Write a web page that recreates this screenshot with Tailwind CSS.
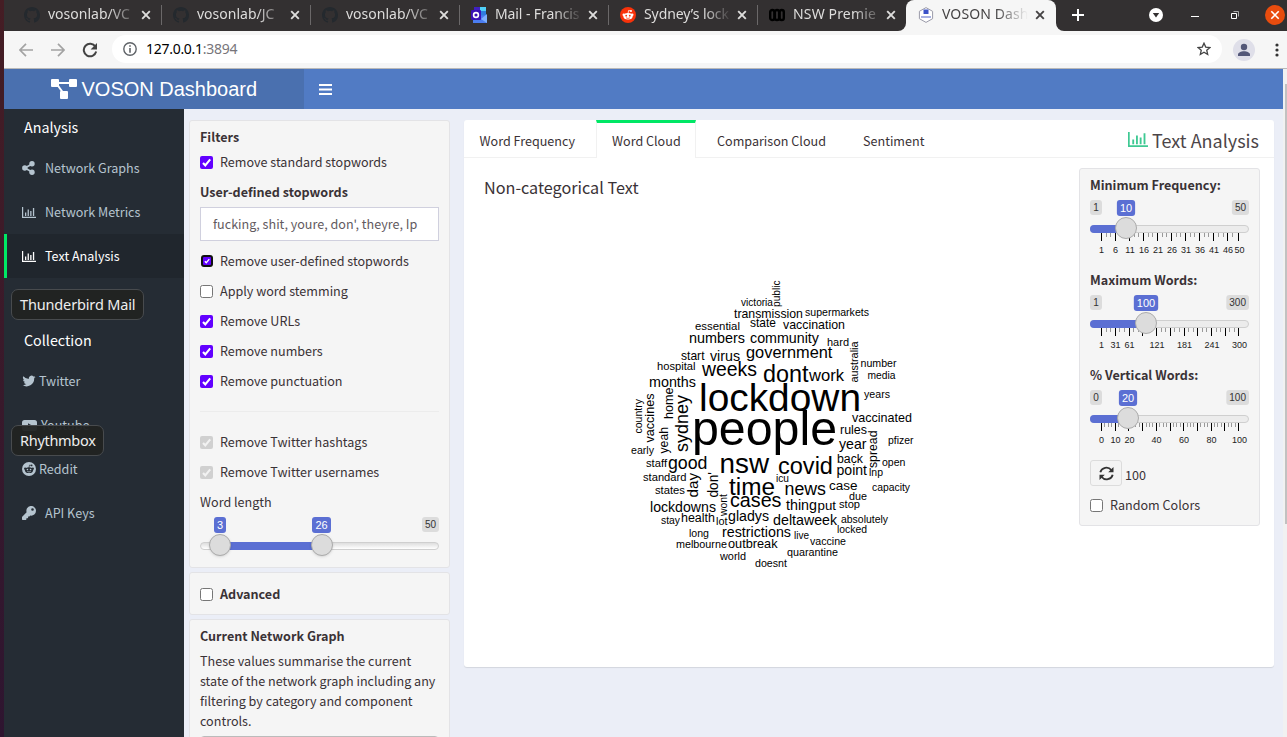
<!DOCTYPE html>
<html lang="en">
<head>
<meta charset="utf-8">
<title>VOSON Dashboard</title>
<script src="https://cdn.jsdelivr.net/npm/@tailwindcss/browser@4"></script>
</head>
<body class="w-[1287px] h-[737px] overflow-hidden flex bg-[#35182b] font-['Noto_Sans_CJK_SC',sans-serif] text-[#3a3236]">
<svg class="hidden">
  <symbol id="github" viewBox="0 0 16 16"><path fill="#24292e" fill-rule="evenodd" d="M8 0C3.58 0 0 3.58 0 8c0 3.54 2.29 6.53 5.47 7.59.4.07.55-.17.55-.38 0-.19-.01-.82-.01-1.49-2.01.37-2.53-.49-2.69-.94-.09-.23-.48-.94-.82-1.13-.28-.15-.68-.52-.01-.53.63-.01 1.08.58 1.23.82.72 1.21 1.87.87 2.33.66.07-.52.28-.87.51-1.07-1.78-.2-3.64-.89-3.64-3.95 0-.87.31-1.59.82-2.15-.08-.2-.36-1.02.08-2.12 0 0 .67-.21 2.2.82a7.6 7.6 0 0 1 4 0c1.53-1.04 2.2-.82 2.2-.82.44 1.1.16 1.92.08 2.12.51.56.82 1.27.82 2.15 0 3.07-1.87 3.75-3.65 3.95.29.25.54.73.54 1.48 0 1.07-.01 1.93-.01 2.2 0 .21.15.46.55.38A8 8 0 0 0 16 8c0-4.42-3.58-8-8-8z"/></symbol>
  <symbol id="close" viewBox="0 0 10 10"><path d="M1.2 1.2l7.6 7.6M8.8 1.2L1.2 8.8" stroke="currentColor" stroke-width="1.9"/></symbol>
  <symbol id="chart" viewBox="0 0 14 11"><path d="M.6 0v10.4H14" fill="none" stroke="currentColor" stroke-width="1.2"/><path fill="currentColor" d="M3 5.5h1.3V9H3zM5.6 2.5h1.3V9H5.6zM8.2 4h1.3v5H8.2zM10.9 1h1.3v8h-1.3z"/></symbol>
  <symbol id="check" viewBox="0 0 13 13"><path d="M3 6.9l2.3 2.4L10.2 3.4" fill="none" stroke="currentColor" stroke-width="2.1"/></symbol>
</svg>

<div class="w-1 shrink-0 bg-gradient-to-b from-[#451d24] to-[#2e1530]"></div>
<div class="w-[1283px] flex flex-col">

  <!-- Browser tab strip -->
  <div class="h-[31px] shrink-0 flex bg-[#f6f6f6] text-[#dedddc] font-['Noto_Sans',sans-serif] text-[14px]">
    <div class="w-[902px] flex pl-[9px] rounded-br-lg bg-[#333031]">
      <div class="w-[149px] h-[29px] flex items-center pl-[11px]"><svg class="size-4 mr-2 shrink-0"><use href="#github"/></svg><span class="w-[88px] mb-[2px] overflow-hidden whitespace-nowrap [mask-image:linear-gradient(to_right,#000_60px,transparent_92px)]">vosonlab/VC</span><svg class="size-[10px] ml-[5px] shrink-0"><use href="#close"/></svg><i class="w-px h-5 bg-[#6b6869] ml-[10px] shrink-0"></i></div>
      <div class="w-[149px] h-[29px] flex items-center pl-[11px]"><svg class="size-4 mr-2 shrink-0"><use href="#github"/></svg><span class="w-[88px] mb-[2px] overflow-hidden whitespace-nowrap [mask-image:linear-gradient(to_right,#000_60px,transparent_92px)]">vosonlab/JC</span><svg class="size-[10px] ml-[5px] shrink-0"><use href="#close"/></svg><i class="w-px h-5 bg-[#6b6869] ml-[10px] shrink-0"></i></div>
      <div class="w-[149px] h-[29px] flex items-center pl-[11px]"><svg class="size-4 mr-2 shrink-0"><use href="#github"/></svg><span class="w-[88px] mb-[2px] overflow-hidden whitespace-nowrap [mask-image:linear-gradient(to_right,#000_60px,transparent_92px)]">vosonlab/VC</span><svg class="size-[10px] ml-[5px] shrink-0"><use href="#close"/></svg><i class="w-px h-5 bg-[#6b6869] ml-[10px] shrink-0"></i></div>
      <div class="w-[149px] h-[29px] flex items-center pl-[11px]">
        <svg class="size-4 mr-2 shrink-0" viewBox="0 0 16 16"><path fill="#50d0f8" d="M3 0h12v9H3z"/><path fill="#3f20c0" d="M3 0h6v3H3z"/><path fill="#2f7de0" d="M9 4h6v5H9z"/><path fill="#4b7df0" d="M2 9l14-1v8H2z"/><path fill="#7db0ff" d="M10 12l6-5v9z"/><rect y="3" width="10" height="10" rx="1" fill="#3b12b5"/><circle cx="5" cy="8" r="2.4" fill="none" stroke="#fff" stroke-width="1.6"/></svg><span class="w-[88px] mb-[2px] overflow-hidden whitespace-nowrap tracking-[-0.1px] [mask-image:linear-gradient(to_right,#000_60px,transparent_88px)]">Mail - Francis</span><svg class="size-[10px] ml-[5px] shrink-0"><use href="#close"/></svg><i class="w-px h-5 bg-[#6b6869] ml-[10px] shrink-0"></i></div>
      <div class="w-[149px] h-[29px] flex items-center pl-[11px]">
        <svg class="size-4 mr-2 shrink-0" viewBox="0 0 16 16"><circle cx="8" cy="8" r="8" fill="#f8320a"/><ellipse cx="8" cy="9.3" rx="4.6" ry="3.3" fill="#fff"/><circle cx="3.7" cy="7.8" r="1.2" fill="#fff"/><circle cx="12.3" cy="7.8" r="1.2" fill="#fff"/><path d="M8 6.5l.6-3 2.3.5" fill="none" stroke="#fff" stroke-width=".8"/><circle cx="11" cy="4" r="1" fill="#fff"/><circle cx="6.2" cy="8.7" r=".9" fill="#f8320a"/><circle cx="9.8" cy="8.7" r=".9" fill="#f8320a"/><path d="M6 10.8q2 1.3 4 0" fill="none" stroke="#f8320a" stroke-width=".7"/></svg><span class="w-[88px] mb-[2px] overflow-hidden whitespace-nowrap tracking-[-0.1px] [mask-image:linear-gradient(to_right,#000_60px,transparent_88px)]">Sydney’s lock</span><svg class="size-[10px] ml-[5px] shrink-0"><use href="#close"/></svg><i class="w-px h-5 bg-[#6b6869] ml-[10px] shrink-0"></i></div>
      <div class="w-[148px] h-[29px] flex items-center pl-[11px]">
        <svg class="size-4 mr-2 shrink-0" viewBox="0 0 16 16"><g fill="none" stroke="#000" stroke-width="2.4"><rect x="1.2" y="3" width="4.2" height="10" rx="2.1"/><rect x="5.9" y="3" width="4.2" height="10" rx="2.1"/><rect x="10.6" y="3" width="4.2" height="10" rx="2.1"/></g></svg><span class="w-[88px] mb-[2px] overflow-hidden whitespace-nowrap tracking-[0.15px] [mask-image:linear-gradient(to_right,#000_60px,transparent_92px)]">NSW Premie</span><svg class="size-[10px] ml-[5px] shrink-0"><use href="#close"/></svg></div>
    </div>
    <div class="bg-[#333031] w-[150px] flex"><div class="w-full flex items-center h-[31px] pb-[2px] pl-[12px] rounded-t-lg bg-[#f6f6f6] text-[#454344]">
      <svg class="size-4 mr-2 shrink-0" viewBox="0 0 16 16"><path d="M8 .6l6.600 3.700v7.400L8 15.400 1.400 11.700V4.300z" fill="#fff" stroke="#9a9aa8"/><path d="M5.500 2.500h5V7h-5z" fill="#3b52c8"/><path d="M3 9h10v2H3z" fill="#a9b2e2"/></svg><span class="w-[86px] mb-[2px] overflow-hidden whitespace-nowrap tracking-[0.1px] [mask-image:linear-gradient(to_right,#000_54px,transparent_86px)]">VOSON Dash</span><svg class="size-[10px] ml-[7px] shrink-0"><use href="#close"/></svg></div></div>
    <div class="flex-1 flex items-center h-[31px] pb-[2px] pl-4 bg-[#333031] rounded-bl-lg">
      <svg class="size-3 text-white shrink-0" viewBox="0 0 12 12"><path d="M6 0v12M0 6h12" stroke="currentColor" stroke-width="2"/></svg>
      <svg class="size-[14px] ml-[65px] shrink-0" viewBox="0 0 14 14"><circle cx="7" cy="7" r="7" fill="#fff"/><path d="M3.800 5h6.400L7 9.400z" fill="#333031"/></svg>
      <i class="w-2 h-px bg-white ml-[28px] mt-[3px] shrink-0"></i>
      <svg class="size-2 ml-[32px] shrink-0" viewBox="0 0 8 8"><path d="M.5 2.500h5v5h-5z" fill="none" stroke="#fff"/><path d="M2.500.5h5v5" fill="none" stroke="#aaa"/></svg>
      <svg class="size-5 ml-[26px] shrink-0" viewBox="0 0 20 20"><circle cx="10" cy="10" r="10" fill="#e94c0e"/><path d="M6.300 6.300l7.400 7.400M13.700 6.300l-7.400 7.400" stroke="#fff" stroke-width="1.6"/></svg>
    </div>
  </div>

  <!-- Address bar -->
  <div class="h-[38px] shrink-0 flex items-center bg-[#f6f6f6] border-b border-[#b9b9b9] pl-[15px]">
    <svg class="w-[14px] h-[14px]" viewBox="0 0 14 14"><path d="M14 7H1M7 .8L.9 7 7 13.2" fill="none" stroke="#a3a3a3" stroke-width="1.7"/></svg>
    <svg class="w-[14px] h-[14px] ml-[18px]" viewBox="0 0 14 14"><path d="M0 7h13M7 .8L13.1 7 7 13.2" fill="none" stroke="#a3a3a3" stroke-width="1.7"/></svg>
    <svg class="w-4 h-4 ml-[17px]" viewBox="0 0 16 16"><path d="M13.4 4.6A6.3 6.3 0 1 0 14.2 9.6" fill="none" stroke="#434343" stroke-width="2"/><path d="M15 1v6.4H8.6z" fill="#434343"/></svg>
    <div class="flex-1 h-7 ml-[14px] mt-[-1px] bg-white rounded-full flex items-center pl-[11px]">
      <svg class="size-[14px]" viewBox="0 0 14 14"><circle cx="7" cy="7" r="6.2" fill="none" stroke="#5f6368" stroke-width="1.4"/><path d="M6.2 3.2h1.6v1.6H6.2zM6.2 6h1.6v4.8H6.2z" fill="#5f6368"/></svg>
      <span class="ml-[9px] mb-[2px] flex-1 font-['Noto_Sans',sans-serif] text-[14px] tracking-[-0.28px] text-black">127.0.0.1<span class="text-[#77757a]">:3894</span></span>
      <svg class="size-[14px] mr-[11px]" viewBox="0 0 14 14"><path d="M7 1.200l1.750 3.900 4.200.4-3.200 2.800.95 4.200L7 10.300l-3.700 2.200.95-4.200-3.200-2.800 4.200-.4z" fill="none" stroke="#434343" stroke-width="1.3"/></svg>
    </div>
    <svg class="size-[22px] ml-[11px]" viewBox="0 0 22 22"><circle cx="11" cy="11" r="11" fill="#dfdfe9"/><circle cx="11" cy="8" r="3.2" fill="#535778"/><path d="M5 17v-1.500c0-2 3-3.300 6-3.300s6 1.300 6 3.300V17z" fill="#535778"/></svg>
    <svg class="w-[4px] h-[14px] ml-[20px] mr-[8px]" viewBox="0 0 4 14"><g fill="#333"><circle cx="2" cy="2" r="1.6"/><circle cx="2" cy="7" r="1.6"/><circle cx="2" cy="12" r="1.6"/></g></svg>
  </div>

  <div class="flex-1 flex">
    <div class="w-[1279px] flex flex-col">
      <!-- Dashboard header -->
      <div class="h-10 shrink-0 flex bg-[#517bc4] text-white">
        <div class="w-[300px] bg-[#4a70af] flex items-center pl-[47px] font-['Liberation_Sans',sans-serif] text-[20px]">
          <svg class="w-[26px] h-5 mr-[4.500px]" viewBox="0 0 26 20"><path d="M4 4h18M5 4l8 11" stroke="#fff" stroke-width="2"/><g fill="#fff"><rect width="8" height="8" rx="1"/><rect x="18" width="8" height="8" rx="1"/><rect x="9" y="12" width="8" height="8" rx="1"/></g></svg>
          <span class="whitespace-nowrap">VOSON Dashboard</span>
        </div>
        <svg class="w-[13px] h-[11px] ml-[15px] mt-[15px]" viewBox="0 0 13 11"><path d="M0 1h13M0 5.500h13M0 10h13" stroke="#fff" stroke-width="2"/></svg>
      </div>

      <div class="flex-1 flex">
        <!-- Sidebar -->
        <div class="w-[180px] bg-[#252c34] text-[#b5c4cf] text-[12.58px] relative">
          <div class="h-[37px] pb-[2px] flex items-center pl-5 text-white text-[14.3px]">Analysis</div>
          <div class="h-11 flex items-center pl-[18px]"><svg class="w-[13px] h-[14px] mr-[10px]" viewBox="0 0 13 14"><path d="M10 3L3 7l7 4" fill="none" stroke="currentColor" stroke-width="1.7"/><g fill="currentColor"><circle cx="10" cy="2.800" r="2.7"/><circle cx="2.800" cy="7" r="2.7"/><circle cx="10" cy="11.2" r="2.7"/></g></svg>Network Graphs</div>
          <div class="h-11 flex items-center pl-[18px]"><svg class="w-[14px] h-[11px] mr-[9px]"><use href="#chart"/></svg>Network Metrics</div>
          <div class="h-11 flex items-center pl-[15px] border-l-[3px] border-[#00e765] bg-[#20262d] text-white"><svg class="w-[14px] h-[11px] mr-[9px]"><use href="#chart"/></svg>Text Analysis</div>
          <div class="h-[44px]"></div>
          <div class="h-[37px] pb-[2px] flex items-center pl-5 text-white text-[14.3px]">Collection</div>
          <div class="h-11 flex items-center pl-[18px]"><svg class="w-[14px] h-3 mr-[3px]" viewBox="0 1 24 22"><path fill="currentColor" d="M24 4.600a10 10 0 0 1-2.8.8 5 5 0 0 0 2.1-2.700 10 10 0 0 1-3.100 1.200 4.900 4.900 0 0 0-8.400 4.500A14 14 0 0 1 1.700 3.100a4.900 4.900 0 0 0 1.500 6.600 5 5 0 0 1-2.200-.6 4.900 4.900 0 0 0 3.900 4.900 5 5 0 0 1-2.200.1 4.900 4.900 0 0 0 4.600 3.400A10 10 0 0 1 0 19.500 14 14 0 0 0 21.500 7.100 10 10 0 0 0 24 4.600z"/></svg>Twitter</div>
          <div class="h-11 flex items-center pl-[18px]"><svg class="w-[15px] h-[11px] mr-[4px]" viewBox="0 0 15 11"><rect width="15" height="11" rx="2.500" fill="currentColor"/><path d="M6 3.200v4.600l4-2.300z" fill="#252c34"/></svg>Youtube</div>
          <div class="h-11 flex items-center pl-[18px]"><svg class="size-[14px] mr-[3px]" viewBox="0 0 16 16"><circle cx="8" cy="8" r="8" fill="currentColor"/><g fill="#252c34"><ellipse cx="8" cy="9.3" rx="4.600" ry="3.400"/><circle cx="3.600" cy="7.700" r="1.300"/><circle cx="12.400" cy="7.700" r="1.300"/><circle cx="11" cy="3.900" r="1"/></g><path d="M8 6.500l.6-3 2.300.5" fill="none" stroke="#252c34" stroke-width=".8"/><g fill="currentColor"><circle cx="6.200" cy="8.600" r=".95"/><circle cx="9.800" cy="8.600" r=".95"/></g><path d="M6 10.700q2 1.400 4 0" fill="none" stroke="currentColor" stroke-width=".8"/></svg>Reddit</div>
          <div class="h-11 flex items-center pl-[18px]"><svg class="size-[14px] mr-[9px]" viewBox="0 0 512 512"><path fill="currentColor" d="M512 176a176 176 0 0 1-209 173l-24 27a24 24 0 0 1-18 8h-37v40a24 24 0 0 1-24 24h-40v40a24 24 0 0 1-24 24H24a24 24 0 0 1-24-24v-78a24 24 0 0 1 7-17l162-162A176 176 0 1 1 512 176zM336 128a48 48 0 1 0 96 0 48 48 0 1 0-96 0z"/></svg>API Keys</div>
          <div class="absolute left-[7px] top-[180px] w-[133px] h-[31px] flex items-center pl-2 rounded-[7px] border border-[#484b4e] bg-[#212322] text-[#eee] whitespace-nowrap font-['Noto_Sans',sans-serif] text-[14.500px] tracking-[-0.15px]">Thunderbird Mail</div>
          <div class="absolute left-[7px] top-[316px] w-[93px] h-[31px] flex items-center pl-2 rounded-[7px] border border-[#484b4e] bg-[#212322]/95 text-[#eee] whitespace-nowrap font-['Noto_Sans',sans-serif] text-[14.500px] tracking-[-0.3px]">Rhythmbox</div>
        </div>

        <!-- Content -->
        <div class="flex-1 bg-[#ebeef7] flex pt-[11px] pl-[5px] h-[628px] overflow-hidden">
          <!-- Filter column -->
          <div class="w-[261px] flex flex-col gap-1 text-[12.58px] leading-5">
            <div class="h-[448px] shrink-0 bg-[#f5f5f5] border border-[#e3e3e6] rounded-[3px] px-[10px] pt-[6px] flex flex-col">
              <div class="font-bold h-5">Filters</div>
              <div class="flex items-center h-[30px] gap-[7px]"><svg class="size-[13px] rounded-[2px] bg-[#6200ff] text-white"><use href="#check"/></svg>Remove standard stopwords</div>
              <div class="font-bold h-[25px] leading-[30px]">User-defined stopwords</div>
              <div class="h-[34px] mt-[5px] border border-[#d0d0de] bg-white px-3 flex items-center text-[#625a60] whitespace-nowrap">fucking, shit, youre, don', theyre, Ip</div>
              <div class="flex items-center h-[30px] gap-[7px] mt-[5px]"><span class="size-[13px] p-[0.5px]"><span class="block size-[12px] p-[2px] rounded-[3px] bg-[#111]"><svg class="size-[8px] rounded-[1px] bg-[#6200ff] text-white" viewBox="0 0 13 13"><use href="#check" width="13" height="13"/></svg></span></span>Remove user-defined stopwords</div>
              <div class="flex items-center h-[30px] gap-[7px]"><span class="size-[13px] rounded-[2.500px] border border-[#767676] bg-white"></span>Apply word stemming</div>
              <div class="flex items-center h-[30px] gap-[7px]"><svg class="size-[13px] rounded-[2px] bg-[#6200ff] text-white"><use href="#check"/></svg>Remove URLs</div>
              <div class="flex items-center h-[30px] gap-[7px]"><svg class="size-[13px] rounded-[2px] bg-[#6200ff] text-white"><use href="#check"/></svg>Remove numbers</div>
              <div class="flex items-center h-[30px] gap-[7px]"><svg class="size-[13px] rounded-[2px] bg-[#6200ff] text-white"><use href="#check"/></svg>Remove punctuation</div>
              <div class="h-px bg-[#ececec] mt-[15px] mb-[15px]"></div>
              <div class="flex items-center h-[30px] gap-[7px]"><svg class="size-[13px] rounded-[2px] bg-[#d0d0d0] text-[#f2f2f2]"><use href="#check"/></svg>Remove Twitter hashtags</div>
              <div class="flex items-center h-[30px] gap-[7px]"><svg class="size-[13px] rounded-[2px] bg-[#d0d0d0] text-[#f2f2f2]"><use href="#check"/></svg>Remove Twitter usernames</div>
              <div class="h-[30px] leading-[30px]">Word length</div>
              <div class="relative h-10 font-['Liberation_Sans',sans-serif]">
                <div class="absolute left-0 right-0 top-[25px] h-2 rounded-full border border-[#cfcfcf] bg-gradient-to-b from-[#dedede] to-white"></div>
                <div class="absolute left-[20px] w-[102px] top-[25px] h-2 bg-[#5b6fd3]"></div>
                <div class="absolute left-[9px] top-[17px] size-[22px] rounded-full border border-[#ababab] bg-[#dcdcdc] shadow-sm"></div>
                <div class="absolute left-[111px] top-[17px] size-[22px] rounded-full border border-[#ababab] bg-[#dcdcdc] shadow-sm"></div>
                <span class="absolute left-[14px] top-0 h-4 px-[3px] rounded-[3px] bg-[#5b6fd3] text-white text-[11px] leading-4">3</span>
                <span class="absolute left-[112px] top-0 h-4 px-[3.500px] rounded-[3px] bg-[#5b6fd3] text-white text-[11px] leading-4">26</span>
                <span class="absolute right-0 top-0 h-[15px] px-[3px] rounded-[3px] bg-[#dcdcdc] text-[#333] text-[10px] leading-[15px]">50</span>
              </div>
            </div>
            <div class="h-[43px] shrink-0 bg-[#f5f5f5] border border-[#e3e3e6] rounded-[3px] px-[10px] flex items-center gap-[7px] font-bold"><span class="size-[13px] mt-px rounded-[2.500px] border border-[#767676] bg-white"></span>Advanced</div>
            <div class="h-[200px] shrink-0 bg-[#f5f5f5] border border-[#e3e3e6] rounded-[3px] px-[10px] pt-[6px]">
              <div class="font-bold h-[25px]">Current Network Graph</div>
              <div class="whitespace-nowrap">These values summarise the current<br>state of the network graph including any<br>filtering by category and component<br>controls.</div>
              <div class="mt-[5px] h-10 rounded border border-[#bbb]"></div>
            </div>
          </div>

          <!-- Text analysis box -->
          <div class="ml-[14px] w-[810px] h-[547px] bg-white rounded-[3px] shadow-[0_1px_1px_rgba(0,0,0,0.1)] text-[12.58px] leading-5">
            <div class="h-[38px] flex border-b border-[#f1f1f1] relative">
              <div class="w-[132px] pl-[15.5px] pt-[11px]">Word Frequency</div>
              <div class="w-[100px] h-[38px] bg-white border-t-[3px] border-t-[#00e765] border-x border-x-[#f1f1f1] pl-[15px] pt-2">Word Cloud</div>
              <div class="w-[147px] pl-[21px] pt-[11px]">Comparison Cloud</div>
              <div class="flex-1 pl-5 pt-[11px]">Sentiment</div>
              <div class="flex items-center pr-[15px] pt-[3px] text-[18px] text-[#4c4548]"><svg class="w-5 h-[15px] mr-1 text-[#3fc993] mt-[-2px]" viewBox="0 0 14 11" preserveAspectRatio="none"><use href="#chart" width="14" height="11"/></svg>Text Analysis</div>
            </div>
            <div class="flex justify-between">
              <div class="w-[615px] h-[509px] relative">
                <div class="absolute left-5 top-[19px] text-[16.2px]">Non-categorical Text</div>
                <svg id="cloud" class="w-[615px] h-[509px] font-['Liberation_Sans',sans-serif]" viewBox="464 158 615 509"></svg>
              </div>
              <div class="mr-[14px] mt-[10px] w-[181px] h-[358px] bg-[#f5f5f5] border border-[#e3e3e6] rounded-[3px] px-[10px] pt-[6px]">
                <div class="font-bold h-5">Minimum Frequency:</div>
                <div class="h-[75px] font-['Liberation_Sans',sans-serif] pt-[5px]"><svg class="slider w-[159px] h-[62px] overflow-visible" data-min="1" data-max="50" data-val="10" data-pos="36" data-step="14.02" data-n="10" data-last="148.5" data-minor="2" data-labels="1@11.5,6@25.5,11@40,16@54,21@68,26@82,31@96,36@110,41@124,46@138,50@149.500"></svg></div>
                <div class="font-bold h-5">Maximum Words:</div>
                <div class="h-[75px] font-['Liberation_Sans',sans-serif] pt-[5px]"><svg class="slider w-[159px] h-[62px] overflow-visible" data-min="1" data-max="300" data-val="100" data-pos="56" data-step="13.75" data-n="10" data-last="148.5" data-minor="2" data-labels="1@11.5,31@25.500,61@39.500,121@67,181@94.500,241@122,300@149.500"></svg></div>
                <div class="font-bold h-5">% Vertical Words:</div>
                <div class="h-[75px] font-['Liberation_Sans',sans-serif] pt-[5px]"><svg class="slider w-[159px] h-[62px] overflow-visible" data-min="0" data-max="100" data-val="20" data-pos="38" data-step="13.7" data-n="10" data-last="148.5" data-minor="3" data-labels="0@11.500,10@25.500,20@39.500,40@66.500,60@94,80@121.500,100@149.500"></svg></div>
                <div class="flex items-center h-[26px] gap-[3px]"><span class="w-8 h-[26px] border border-[#dcdcdc] rounded-[3px] bg-[#f4f4f4] flex items-center justify-center"><svg class="size-[15px]" viewBox="0 0 15 15"><g fill="none" stroke="#333" stroke-width="1.8"><path d="M1.300 6.300A6.300 6.300 0 0 1 12.300 4"/><path d="M13.700 8.700A6.300 6.300 0 0 1 2.700 11"/></g><path fill="#333" d="M14.500 1v5.300H9.200zM.5 14V8.700h5.300z"/></svg></span><span class="pt-[3px]">100</span></div>
                <div class="flex items-center h-[30px] gap-[7px] mt-[4px]"><span class="size-[13px] rounded-[2.500px] border border-[#767676] bg-white"></span>Random Colors</div>
              </div>
            </div>
          </div>
        </div>
      </div>
    </div>
    <!-- Scrollbar -->
    <div class="flex-1 bg-[#f1f1f1] pt-[15px] pl-[2px]"><div class="h-[440px] bg-[#c1c1c1]"></div></div>
  </div>
</div>

<script>
const NS = 'http://www.w3.org/2000/svg';
function add(parent, tag, attrs, text) {
  const e = document.createElementNS(NS, tag);
  for (const k in attrs) e.setAttribute(k, attrs[k]);
  if (text !== undefined) e.textContent = text;
  parent.appendChild(e);
  return e;
}
const ctx = document.createElement('canvas').getContext('2d');
ctx.font = '100px "Liberation Sans"';

// Horizontal words: text, left, right, baseline
const across = [
['victoria',741,773,305.7],['transmission',734,803,318],['supermarkets',805,869,316],['state',750,776,327],['vaccination',783,845,329],['essential',695,740,330],['numbers',689,745,343],['community',750,819,343],['hard',827,849,346],['start',681,704.5,360],['virus',710,740,361],['government',746,832.5,358],['weeks',702,757,376],['dont',763,808.5,382],['work',809,844,381],['number',860.5,896.5,367],['media',867.5,895.5,379],['hospital',657,695.5,370],['months',649,696,387],['lockdown',699,861,411],['people',692,837,444.500],['years',864,890,398],['vaccinated',852,912,422],['rules',840,867,434],['year',839,866.5,448.5],['pfizer',888,913.5,444],['back',837,863,462.7],['open',882,905.500,466],['point',836.500,867,475],['lnp',869,883,476],['icu',776,789,482],['good',668,707.500,469],['staff',646,667,467],['standard',643,686.500,481],['states',655,685,494],['nsw',719.500,769,472.5],['covid',778,833,474],['time',729,775,495],['cases',730,781.500,507],['news',784.500,826,495],['case',829,857.500,490],['capacity',872,910,491],['due',849,867,500],['thing',786,817,510],['put',817.500,836,510],['stop',839,860,508],['lockdowns',650,716,512],['stay',661,680,524],['health',681,715,522],['lot',716,727.5,525],['gladys',728,769,521],['delta',773,804,525],['week',804,837,525],['absolutely',841,888,523],['locked',837,867,533],['long',689,709,537],['restrictions',722,791,537],['live',794,809,539],['vaccine',810,846,545],['melbourne',676,727,548],['outbreak',728,777.500,548],['quarantine',787,838,556],['world',720,746,560],['doesnt',755,787,567],['early',631,654,454]];
// Vertical words: text, baseline x, bottom, top
const upward = [
['country',642,433.500,399],['vaccines',654,442.5,393.5],['yeah',668,453.5,427],['home',673,419,387.5],['sydney',688,452,395],['day',698,497.5,473],["don'",718.3,497.5,472],['wont',727,516,494],['public',780,307,280.500],['australia',858,382.500,341.5],['spread',877,468,430.5]];
const cloud = document.getElementById('cloud');
for (const [t, a, b, y] of across)
  add(cloud, 'text', {x: a, y, 'font-size': ((b - a) / ctx.measureText(t).width * 100).toFixed(2), fill: '#000'}, t);
for (const [t, x, a, b] of upward)
  add(cloud, 'text', {transform: `translate(${x} ${a}) rotate(-90)`, 'font-size': ((a - b) / ctx.measureText(t).width * 100).toFixed(2), fill: '#000'}, t);

// Range sliders with tick grids
for (const s of document.querySelectorAll('.slider')) {
  const d = s.dataset, pos = +d.pos, step = +d.step, last = +d.last;
  const badge = (cx, w, h, y, fill, color, size, text) => {
    add(s, 'rect', {x: cx - w / 2, y, width: w, height: h, rx: 3, fill});
    add(s, 'text', {x: cx, y: y + h / 2 + size * .36, 'text-anchor': 'middle', 'font-size': size, fill: color}, text);
  };
  const wMax = d.max.length * 5.56 + 6, wVal = d.val.length * 6.12 + 6;
  badge(6, 12, 15, 0, '#dcdcdc', '#333', 10, d.min);
  badge(159 - wMax / 2, wMax, 15, 0, '#dcdcdc', '#333', 10, d.max);
  badge(pos, wVal, 16, 0, '#5b6fd3', '#fff', 11, d.val);
  for (let i = 0; i < +d.n; i++) {
    const x = 11.5 + i * step;
    add(s, 'rect', {x: Math.round(x - .5), y: 33, width: 1, height: 8, fill: '#000'});
    for (let j = 1; j <= +d.minor; j++) {
      const m = x + j * step / (+d.minor + 1);
      if (m < last - 2) add(s, 'rect', {x: Math.round(m - .5), y: 33, width: 1, height: 4, fill: '#999'});
    }
  }
  add(s, 'rect', {x: 148, y: 33, width: 1, height: 8, fill: '#000'});
  add(s, 'rect', {x: .5, y: 25.5, width: 158, height: 7, rx: 3.5, fill: '#ececec', stroke: '#cfcfcf'});
  add(s, 'path', {d: `M${pos} 25H4a4 4 0 0 0 0 8H${pos}z`, fill: '#5b6fd3'});
  add(s, 'circle', {cx: pos, cy: 28, r: 10.5, fill: '#dcdcdc', stroke: '#ababab'});
  for (const l of d.labels.split(',')) {
    const [t, x] = l.split('@');
    add(s, 'text', {x, y: 53, 'text-anchor': 'middle', 'font-size': 9, fill: '#222'}, t);
  }
}
</script>
</body>
</html>
